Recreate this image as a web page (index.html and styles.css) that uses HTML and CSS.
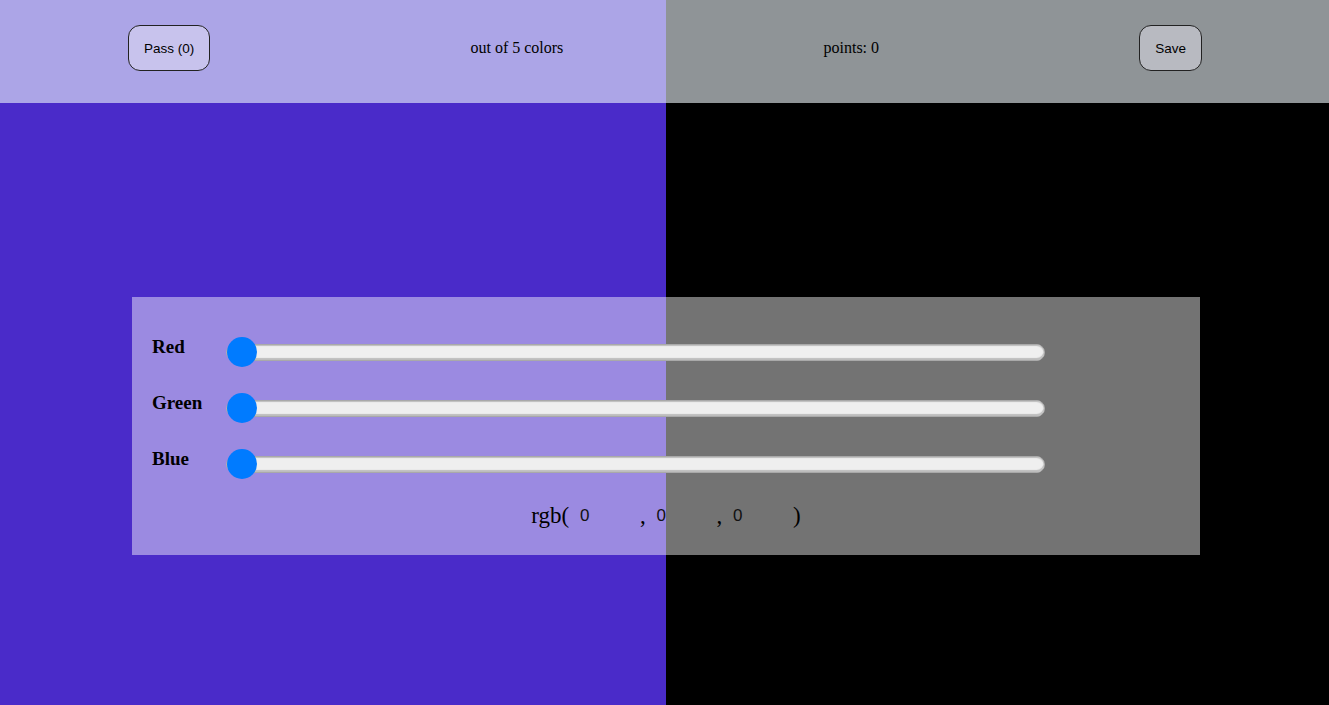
FILE: index.html
```html
<!DOCTYPE html>
<html>
<head>
<meta charset="utf-8">
<link rel="stylesheet" href="styles.css">
</head>
<body>
<div class="stage">
  <div class="half half-target"></div>
  <div class="half half-guess"></div>

  <header class="topbar">
    <button class="btn">Pass (0)</button>
    <span class="info">out of 5 colors</span>
    <span class="info">points: 0</span>
    <button class="btn">Save</button>
  </header>

  <section class="panel">
    <div class="row">
      <span class="label">Red</span>
      <input class="slider" type="range" min="0" max="255" value="0">
    </div>
    <div class="row">
      <span class="label">Green</span>
      <input class="slider" type="range" min="0" max="255" value="0">
    </div>
    <div class="row">
      <span class="label">Blue</span>
      <input class="slider" type="range" min="0" max="255" value="0">
    </div>
    <div class="rgb">rgb( <input class="num" type="text" value="0">, <input class="num" type="text" value="0">, <input class="num" type="text" value="0">)</div>
  </section>
</div>
</body>
</html>
```

FILE: styles.css
```css
html, body {
  margin: 0;
  padding: 0;
}

body {
  font-family: "Liberation Serif", "Times New Roman", serif;
  overflow: hidden;
}

.stage {
  position: relative;
  display: grid;
  grid-template-columns: 666px 1fr;
  height: 705px;
}

.half-target {
  background: #4a2bc9;
}

.half-guess {
  background: #000000;
}

.topbar {
  position: absolute;
  top: 0;
  left: 0;
  right: 0;
  height: 103px;
  box-sizing: border-box;
  padding: 25px 127px 0 128px;
  display: flex;
  align-items: flex-start;
  justify-content: space-between;
  background: rgba(238, 246, 252, 0.6);
}

.info {
  font-size: 16px;
  line-height: 46px;
  color: #000;
}

.btn {
  height: 46px;
  padding: 0 15px;
  border: 1px solid #222;
  border-radius: 12px;
  font-family: "Liberation Sans", Arial, sans-serif;
  font-size: 13.5px;
  color: #000;
  background: rgba(235, 232, 245, 0.45);
}

.panel {
  position: absolute;
  left: 132px;
  top: 297px;
  width: 1068px;
  height: 258px;
  box-sizing: border-box;
  padding: 27px 20px 0 20px;
  background: rgba(255, 255, 255, 0.45);
}

.row {
  display: flex;
  align-items: center;
  height: 56px;
}

.label {
  width: 75px;
  font-size: 19px;
  font-weight: bold;
  margin-bottom: 10px;
}

.slider {
  -webkit-appearance: none;
  appearance: none;
  width: 819px;
  height: 30px;
  margin: 0 0 0 -1px;
  background: transparent;
}

.slider::-webkit-slider-runnable-track {
  height: 17px;
  box-sizing: border-box;
  background: #efefef;
  border: 1px solid #a9a9a9;
  border-radius: 9px;
  box-shadow: inset 0 1px 1px #bdbdbd, inset 0 -2px 1px #bdbdbd;
}

.slider::-webkit-slider-thumb {
  -webkit-appearance: none;
  appearance: none;
  width: 30px;
  height: 30px;
  border-radius: 50%;
  background: #007bff;
  border: none;
  margin-top: -7.5px;
}

.rgb {
  height: 48px;
  line-height: 48px;
  text-align: center;
  font-size: 23px;
  color: #000;
}

.num {
  width: 65px;
  box-sizing: border-box;
  padding: 0 0 0 5px;
  border: none;
  outline: none;
  background: transparent;
  font-family: "Liberation Sans", Arial, sans-serif;
  font-size: 17px;
  color: #111;
  vertical-align: 2px;
}
```
